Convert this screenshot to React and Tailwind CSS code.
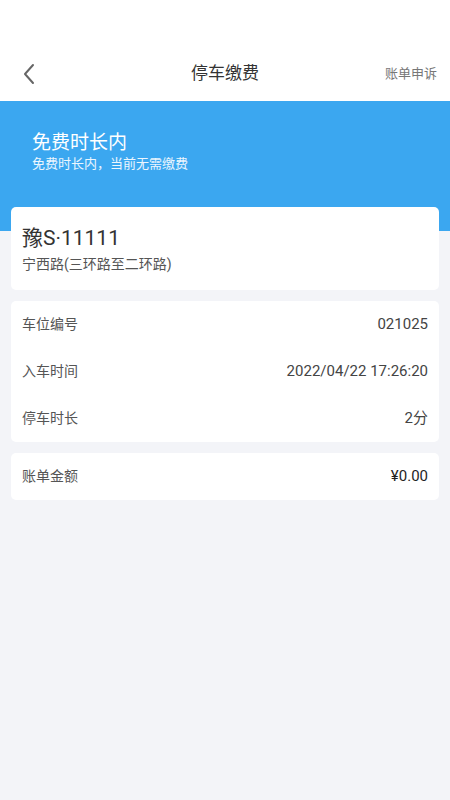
import React from 'react';

const font = { fontFamily: 'Roboto, "Noto Sans CJK SC", "Noto Sans", sans-serif' };

function Row({ label, value, strong }) {
  return (
    <div className="flex h-[47px] items-center justify-between px-[11px]">
      <span className="text-[14px] text-[#555]">{label}</span>
      <span className={strong ? 'text-[15px] text-[#1f1f1f]' : 'text-[15px] text-[#444]'}>{value}</span>
    </div>
  );
}

export default function App() {
  return (
    <div className="min-h-[800px] w-[450px] bg-[#f3f4f8]" style={font}>
      <div className="bg-white pt-[46px]">
        <div className="relative flex h-[55px] items-center justify-center">
          <button className="absolute left-[20px] top-[17px] text-[#666]">
            <svg width="18" height="22" viewBox="0 0 18 22" fill="none" stroke="currentColor" strokeWidth="2" strokeLinecap="round" strokeLinejoin="round">
              <path d="M13 2 L5 11 L13 20" />
            </svg>
          </button>
          <h1 className="text-[17px] text-[#333]">停车缴费</h1>
          <span className="absolute right-[13px] text-[13px] text-[#777]">账单申诉</span>
        </div>
      </div>
      <div className="bg-[#3ba7f0] px-[32px] pb-[58px] pt-[30px] text-white">
        <p className="text-[19px] leading-[24px]">免费时长内</p>
        <p className="text-[13px] leading-[18px] text-white/90">免费时长内，当前无需缴费</p>
      </div>
      <div className="-mt-[24px] flex flex-col gap-[11px] px-[11px]">
        <div className="rounded-[5px] bg-white px-[11px] pb-[16px] pt-[18px]">
          <p className="text-[21px] leading-[26px] text-[#333]">豫S·11111</p>
          <p className="mt-[3px] text-[14px] leading-[20px] text-[#555]">宁西路(三环路至二环路)</p>
        </div>
        <div className="rounded-[5px] bg-white">
          <Row label="车位编号" value="021025" />
          <Row label="入车时间" value="2022/04/22 17:26:20" />
          <Row label="停车时长" value="2分" />
        </div>
        <div className="rounded-[5px] bg-white">
          <Row label="账单金额" value="¥0.00" strong />
        </div>
      </div>
    </div>
  );
}
